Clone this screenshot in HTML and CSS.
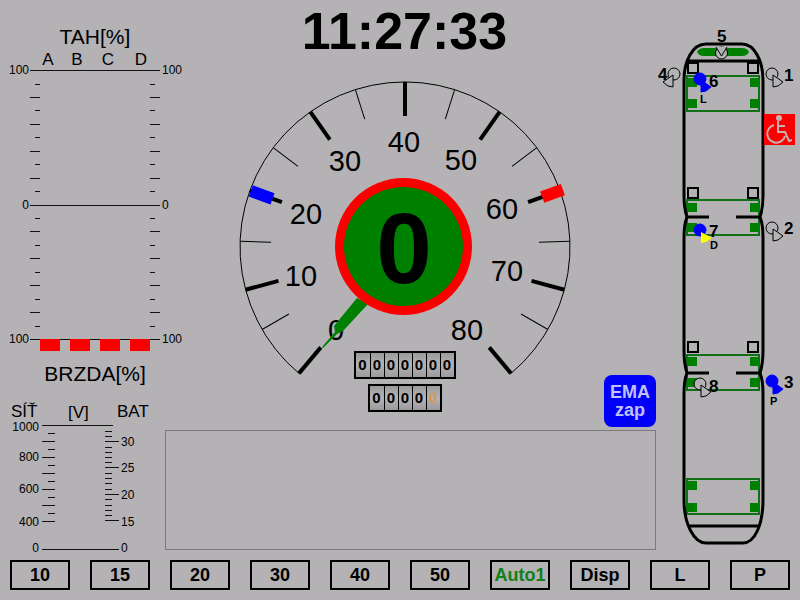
FILE: index.html
```html
<!DOCTYPE html>
<html lang="cs">
<head>
  <meta charset="UTF-8">
  <meta name="viewport" content="width=device-width, initial-scale=1.0">
  <title>Tram display</title>
  <link rel="stylesheet" href="styles.css">
</head>
<body>
  <main class="display">

    <section class="side">
      <!-- traction / braking effort -->
      <svg class="scale" viewBox="0 24 165 366" width="165" height="366">
        <g class="title" text-anchor="middle">
          <text x="95" y="44">TAH[%]</text>
          <text x="95" y="381">BRZDA[%]</text>
        </g>
        <g class="head" text-anchor="middle">
          <text x="48" y="65">A</text>
          <text x="77" y="65">B</text>
          <text x="108" y="65">C</text>
          <text x="141" y="65">D</text>
        </g>
        <g class="num" text-anchor="end">
          <text x="29" y="74">100</text>
          <text x="29" y="209">0</text>
          <text x="29" y="343">100</text>
        </g>
        <g class="num">
          <text x="162" y="74">100</text>
          <text x="162" y="209">0</text>
          <text x="162" y="343">100</text>
        </g>
        <path class="tick" d="M30 70H160M30 205H160M30 339H160"/>
        <path class="tick" d="M30 97h10M30 124h10M30 151h10M30 178h10M30 231h10M30 258h10M30 285h10M30 312h10"/>
        <path class="tick" d="M150 97h10M150 124h10M150 151h10M150 178h10M150 231h10M150 258h10M150 285h10M150 312h10"/>
        <path class="tick" d="M35 84h5M35 110h5M35 137h5M35 164h5M35 191h5M35 218h5M35 245h5M35 272h5M35 299h5M35 326h5"/>
        <path class="tick" d="M150 84h5M150 110h5M150 137h5M150 164h5M150 191h5M150 218h5M150 245h5M150 272h5M150 299h5M150 326h5"/>
        <path class="red" d="M40 339h20v12H40zM70 339h20v12H70zM100 339h20v12h-20zM130 339h20v12h-20z"/>
      </svg>

      <!-- line and battery voltage -->
      <svg class="scale" viewBox="0 390 165 160" width="165" height="160">
        <g class="head">
          <text x="11" y="417">SÍŤ</text>
          <text x="68" y="418">[V]</text>
          <text x="117" y="417">BAT</text>
        </g>
        <g class="num" text-anchor="end">
          <text x="39" y="431">1000</text>
          <text x="39" y="461">800</text>
          <text x="39" y="493">600</text>
          <text x="39" y="526">400</text>
          <text x="39" y="552">0</text>
        </g>
        <g class="num">
          <text x="121" y="446">30</text>
          <text x="121" y="472">25</text>
          <text x="121" y="499">20</text>
          <text x="121" y="526">15</text>
          <text x="121" y="552">0</text>
        </g>
        <path class="tick" d="M42 425H113M42 549H119"/>
        <path class="tick" d="M42 441h13M42 457h13M42 473h13M42 489h13M42 505h13M42 521h13"/>
        <path class="tick" d="M48 433h7M48 449h7M48 465h7M48 481h7M48 497h7M48 513h7"/>
        <path class="tick" d="M105 441h14M105 467h14M105 494h14M105 520h14"/>
        <path class="tick" d="M105 431h7M105 436h7M105 447h7M105 452h7M105 457h7M105 462h7M105 473h7M105 478h7M105 483h7M105 489h7M105 499h7M105 505h7M105 510h7M105 515h7"/>
      </svg>
    </section>

    <section class="center">
      <time class="clock">11:27:33</time>

      <div class="speed">
        <svg class="dial" viewBox="235 78 340 300" width="340" height="300">
          <defs>
            <path id="major" d="M0 -165V-131"/>
            <path id="minor" d="M0 -165V-134"/>
          </defs>
          <g transform="translate(405 247)">
            <path class="arc" d="M-106 126.400A165 165 0 1 1 106 126.400"/>
            <g class="major">
              <use href="#major" transform="rotate(-140)"/>
              <use href="#major" transform="rotate(-105)"/>
              <use href="#major" transform="rotate(-70)"/>
              <use href="#major" transform="rotate(-35)"/>
              <use href="#major"/>
              <use href="#major" transform="rotate(35)"/>
              <use href="#major" transform="rotate(70)"/>
              <use href="#major" transform="rotate(105)"/>
              <use href="#major" transform="rotate(140)"/>
            </g>
            <g class="minor">
              <use href="#minor" transform="rotate(-120)"/>
              <use href="#minor" transform="rotate(-88)"/>
              <use href="#minor" transform="rotate(-53)"/>
              <use href="#minor" transform="rotate(-17.500)"/>
              <use href="#minor" transform="rotate(17.500)"/>
              <use href="#minor" transform="rotate(53)"/>
              <use href="#minor" transform="rotate(88)"/>
              <use href="#minor" transform="rotate(120)"/>
            </g>
            <rect class="blue" x="-6" y="-164" width="12" height="23" transform="rotate(-70)"/>
            <rect class="red" x="-6" y="-168" width="12" height="22" transform="rotate(70)"/>
          </g>
          <g class="mark" text-anchor="middle">
            <text x="336" y="340">0</text>
            <text x="301" y="286">10</text>
            <text x="306" y="224">20</text>
            <text x="345" y="171">30</text>
            <text x="404" y="152">40</text>
            <text x="461" y="170">50</text>
            <text x="502" y="219">60</text>
            <text x="507" y="281">70</text>
            <text x="467" y="340">80</text>
          </g>
          <path class="green" d="M357 298L334 326L335 332L322 347L323 348L337 334L343 331L368 304Z"/>
          <circle class="red" cx="403.500" cy="246.500" r="68.500"/>
          <circle class="green" cx="403.500" cy="246.500" r="59.500"/>
          <text class="value" x="404" y="283" text-anchor="middle">0</text>
        </svg>

        <div class="counters">
          <div class="counter"><span>0</span><span>0</span><span>0</span><span>0</span><span>0</span><span>0</span><span>0</span></div>
          <div class="counter"><span>0</span><span>0</span><span>0</span><span>0</span><span class="tenth">0</span></div>
        </div>

        <button class="ema" type="button">EMA<br>zap</button>
      </div>

      <div class="messages"></div>
    </section>

    <!-- vehicle plan with doors and cameras -->
    <svg class="vehicle" viewBox="656 28 144 522" width="144" height="522">
      <defs>
        <g id="camera">
          <circle r="6"/>
          <path d="M1 1V13L6 12L11 8Z"/>
        </g>
        <path id="wheels" d="M0 0h9v9H0zM62 0h9v9H62z"/>
        <path id="doors" d="M0 0h10v10H0zM60 0h10v10H60z"/>
      </defs>

      <g class="frame">
        <rect x="687" y="76" width="72" height="35"/>
        <rect x="687" y="200" width="72" height="35"/>
        <rect x="687" y="355" width="72" height="35"/>
        <rect x="687" y="479" width="72" height="35"/>
      </g>
      <g class="green">
        <use href="#wheels" x="688" y="78"/>
        <use href="#wheels" x="688" y="99"/>
        <use href="#wheels" x="688" y="203"/>
        <use href="#wheels" x="688" y="223"/>
        <use href="#wheels" x="688" y="357"/>
        <use href="#wheels" x="688" y="378"/>
        <use href="#wheels" x="688" y="481"/>
        <use href="#wheels" x="688" y="503"/>
        <path d="M697 52Q699 48 704 48H742Q747 48 749 52Q747 56 742 56H704Q699 56 697 52Z"/>
      </g>
      <g class="body">
        <path d="M687 217Q684 208 684 196V80C684 62 692 44 706 44H742C755 44 763 62 763 80V196Q763 208 760 217"/>
        <path d="M687 217Q684 224 684 238V350Q684 364 687 373M760 217Q763 224 763 238V350Q763 364 760 373"/>
        <path d="M687 373Q684 380 684 394V500C684 524 694 543 706 543H743C755 543 763 524 763 500V394Q763 380 760 373"/>
        <path d="M686 61H761M688 526H760"/>
        <path d="M687 217H709M736 217H760M687 373H709M736 373H760"/>
      </g>
      <g class="door">
        <use href="#doors" x="688" y="63"/>
        <use href="#doors" x="688" y="188"/>
        <use href="#doors" x="688" y="342"/>
      </g>

      <g class="camera">
        <circle cx="721.500" cy="53" r="6"/>
        <path d="M716 47L721.500 56L727 47"/>
        <use href="#camera" transform="translate(674 74) scale(-1 1)"/>
        <use href="#camera" x="772" y="74"/>
        <use href="#camera" x="772" y="228"/>
        <use href="#camera" x="700" y="384"/>
      </g>
      <g class="camera on">
        <use href="#camera" x="700" y="79"/>
        <use href="#camera" x="772" y="381"/>
        <circle cx="700" cy="230" r="6"/>
      </g>
      <path class="yellow" d="M701 232V243L706 242L712 238Z"/>

      <g class="label">
        <text x="717" y="42">5</text>
        <text x="658" y="80">4</text>
        <text x="784" y="81">1</text>
        <text x="709" y="87">6</text>
        <text x="709" y="237">7</text>
        <text x="784" y="234">2</text>
        <text x="784" y="388">3</text>
        <text x="709" y="392">8</text>
      </g>
      <g class="side-label">
        <text x="700" y="103">L</text>
        <text x="710" y="249">D</text>
        <text x="770" y="405">P</text>
      </g>

      <rect class="red" x="764" y="114" width="31" height="31"/>
      <circle class="chair-head" cx="779" cy="118" r="3"/>
      <path class="chair" d="M778 121V132H785L789 141L792 140M778 126H785M774 125A9 9 0 1 0 785 136"/>
    </svg>
  </main>

  <nav class="keys">
    <button type="button">10</button>
    <button type="button">15</button>
    <button type="button">20</button>
    <button type="button">30</button>
    <button type="button">40</button>
    <button type="button">50</button>
    <button type="button" class="active">Auto1</button>
    <button type="button">Disp</button>
    <button type="button">L</button>
    <button type="button">P</button>
  </nav>
</body>
</html>
```

FILE: styles.css
```css
* {
  box-sizing: border-box;
}
body {
  margin: 0;
  min-height: 100vh;
  display: flex;
  flex-direction: column;
  background: #b4b2b5;
  color: #000;
  font-family: "Liberation Sans", Arial, sans-serif;
}
button {
  font-family: inherit;
  font-size: 18px;
  font-weight: bold;
  padding: 0;
  cursor: pointer;
}
svg {
  display: block;
  overflow: visible;
}

.display {
  flex: 1;
  display: grid;
  grid-template-columns: 165px 1fr 144px;
}

/* shared colours */
.red {
  fill: #fb0000;
}
.green {
  fill: #008000;
}
.blue {
  fill: #0000f8;
}
.yellow {
  fill: #ffff00;
}

/* left scales */
.side {
  padding-top: 24px;
}
.title {
  font-size: 21px;
}
.head {
  font-size: 17px;
}
.num {
  font-size: 12px;
}
.tick {
  stroke: #111;
  stroke-width: 1;
  shape-rendering: crispEdges;
}

/* clock and speedometer */
.center {
  display: flex;
  flex-direction: column;
}
.clock {
  height: 76px;
  padding-right: 12px;
  font-size: 52px;
  font-weight: bold;
  line-height: 62px;
  text-align: center;
}
.speed {
  height: 354px;
  display: grid;
}
.speed > * {
  grid-area: 1 / 1;
}
.dial {
  justify-self: center;
  margin: 2px 12px 0 0;
}
.arc {
  fill: none;
  stroke: #000;
}
.major {
  stroke: #000;
  stroke-width: 4;
}
.minor {
  stroke: #000;
}
.mark {
  font-size: 29px;
}
.value {
  font-size: 100px;
  font-weight: bold;
}

.counters {
  align-self: end;
  justify-self: center;
  display: flex;
  flex-direction: column;
  align-items: center;
  gap: 5px;
  margin: 0 12px 18px 0;
}
.counter {
  display: flex;
  border: 2px solid #000;
  font-size: 15px;
  font-weight: bold;
  line-height: 24px;
  text-align: center;
}
.counter span {
  width: 14px;
  background: linear-gradient(#9c9a9d, #b4b2b5 50%, #9c9a9d);
}
.counter span + span {
  border-left: 1px solid #000;
}
.counter .tenth {
  color: #d09a50;
}

.ema {
  align-self: end;
  justify-self: end;
  width: 52px;
  height: 52px;
  margin-bottom: 3px;
  border: 0;
  border-radius: 8px;
  background: #0000f8;
  color: #c0c0ff;
  line-height: 18px;
}
.messages {
  flex: 1;
  min-height: 120px;
  border: 1px solid #7c7a7d;
}

/* vehicle plan */
.vehicle {
  margin-top: 28px;
}
.frame {
  fill: none;
  stroke: #107018;
  stroke-width: 2;
}
.body {
  fill: none;
  stroke: #000;
  stroke-width: 3;
}
.door {
  fill: none;
  stroke: #000;
  stroke-width: 2;
}
.camera {
  fill: #b4b2b5;
  stroke: #000;
}
.on {
  fill: #0000f8;
  stroke: #0000f8;
}
.label {
  font-size: 17px;
  font-weight: bold;
}
.side-label {
  font-size: 11px;
  font-weight: bold;
}
.chair {
  fill: none;
  stroke: #c8b0b0;
  stroke-width: 2;
}
.chair-head {
  fill: #c8b0b0;
}

/* bottom keys */
.keys {
  display: flex;
  gap: 20px;
  padding: 10px;
}
.keys button {
  flex: 1;
  height: 30px;
  border: 2px solid #000;
  background: none;
  color: #000;
}
.keys .active {
  color: #108018;
}
```
